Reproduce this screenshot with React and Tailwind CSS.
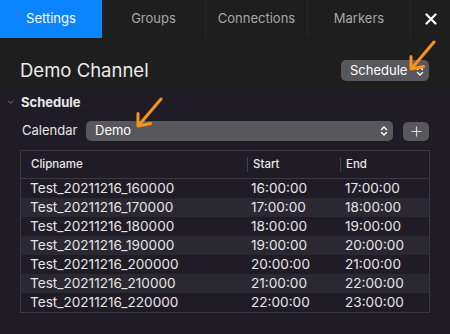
import React from "react";

const rows = [
  ["Test_20211216_160000", "16:00:00", "17:00:00"],
  ["Test_20211216_170000", "17:00:00", "18:00:00"],
  ["Test_20211216_180000", "18:00:00", "19:00:00"],
  ["Test_20211216_190000", "19:00:00", "20:00:00"],
  ["Test_20211216_200000", "20:00:00", "21:00:00"],
  ["Test_20211216_210000", "21:00:00", "22:00:00"],
  ["Test_20211216_220000", "22:00:00", "23:00:00"],
];

function UpDown({ className }) {
  return (
    <svg viewBox="0 0 8 12" className={className} fill="none" stroke="currentColor" strokeWidth="1.4" strokeLinecap="round" strokeLinejoin="round">
      <path d="M1.5 4.5 4 2l2.5 2.5M1.5 7.5 4 10l2.5-2.5" />
    </svg>
  );
}

function Arrow({ className }) {
  return (
    <svg viewBox="0 0 30 32" className={className} fill="none" stroke="#f7941d" strokeWidth="3" strokeLinecap="round" strokeLinejoin="round">
      <path d="M27 2 5 28M4 16.5 4 29l12.5-2.5" />
    </svg>
  );
}

export default function App() {
  return (
    <div className="relative w-[450px] h-[334px] overflow-hidden bg-[#201c26] text-[13px] text-[#e6e6e6]" style={{ fontFamily: "Inter, 'Liberation Sans', sans-serif" }}>
      <div className="flex h-[38px] bg-[#1e1e1e] text-[#a8a8a8]">
        <div className="flex w-[102px] items-center justify-center bg-[#0a84ff] text-white">Settings</div>
        <div className="flex w-[103px] items-center justify-center">Groups</div>
        <div className="flex w-[102px] items-center justify-center border-l border-[#262626]">Connections</div>
        <div className="flex w-[103px] items-center justify-center border-l border-[#262626]">Markers</div>
        <div className="flex flex-1 items-center justify-center border-l border-[#262626] text-white">
          <svg viewBox="0 0 12 12" className="h-[12px] w-[12px]" stroke="currentColor" strokeWidth="2.2" strokeLinecap="round">
            <path d="M1.5 1.5l9 9M10.5 1.5l-9 9" />
          </svg>
        </div>
      </div>

      <div className="flex h-[53px] items-center justify-between bg-[#1e1e1e] pl-[20px] pr-[21px] pt-[12px]">
        <div className="text-[18.5px] text-[#ececec]">Demo Channel</div>
        <div className="flex h-[21px] w-[88px] items-center justify-between rounded-[5px] bg-[#58575c] pl-[9px] pr-[5px] text-white">
          <span>Schedule</span>
          <UpDown className="h-[12px] w-[8px]" />
        </div>
      </div>

      <div className="flex h-[22px] items-center gap-[7px] pl-[7px] pt-[1px]">
        <svg viewBox="0 0 8 6" className="h-[5px] w-[7px]" fill="none" stroke="#7c7a80" strokeWidth="1.2">
          <path d="M1 1l3 3 3-3" />
        </svg>
        <span className="font-bold text-[#e8e8e8]">Schedule</span>
      </div>

      <div className="mt-[8px] flex h-[20px] items-center pl-[22px] pr-[21px]">
        <span className="w-[64px]">Calendar</span>
        <div className="flex h-[20px] flex-1 items-center justify-between rounded-[5px] bg-[#58575c] pl-[9px] pr-[5px] text-white">
          <span>Demo</span>
          <UpDown className="h-[12px] w-[8px]" />
        </div>
        <div className="ml-[10px] flex h-[19px] w-[26px] items-center justify-center rounded-[5px] bg-[#58575c] text-[#d8d8d8]">
          <svg viewBox="0 0 12 12" className="h-[11px] w-[11px]" stroke="currentColor" strokeWidth="1.3">
            <path d="M6 0.5v11M0.5 6h11" />
          </svg>
        </div>
      </div>

      <div className="mx-[20px] mt-[9px] w-[410px] border border-[#3a383e]">
        <div className="flex h-[28px] items-center border-b border-[#3a383e] font-medium text-[11.5px] text-[#e8e8e8]">
          <div className="w-[226px] pl-[10px]">Clipname</div>
          <div className="h-[15px] w-[93px] border-l border-[#45434a] pl-[5px] leading-[15px]">Start</div>
          <div className="h-[15px] flex-1 border-l border-[#45434a] pl-[5px] leading-[15px]">End</div>
        </div>
        {rows.map((r, i) => (
          <div key={r[0]} className={"flex h-[19px] items-center text-[13.6px] " + (i % 2 === 1 ? "bg-[#2a2830]" : "")}>
            <div className="w-[226px] pl-[9px]">{r[0]}</div>
            <div className="w-[93px] pl-[4px]">{r[1]}</div>
            <div className="flex-1 pl-[5px]">{r[2]}</div>
          </div>
        ))}
      </div>

      <Arrow className="absolute left-[407px] top-[40px] h-[32px] w-[30px]" />
      <Arrow className="absolute left-[134px] top-[97px] h-[32px] w-[30px]" />
    </div>
  );
}
